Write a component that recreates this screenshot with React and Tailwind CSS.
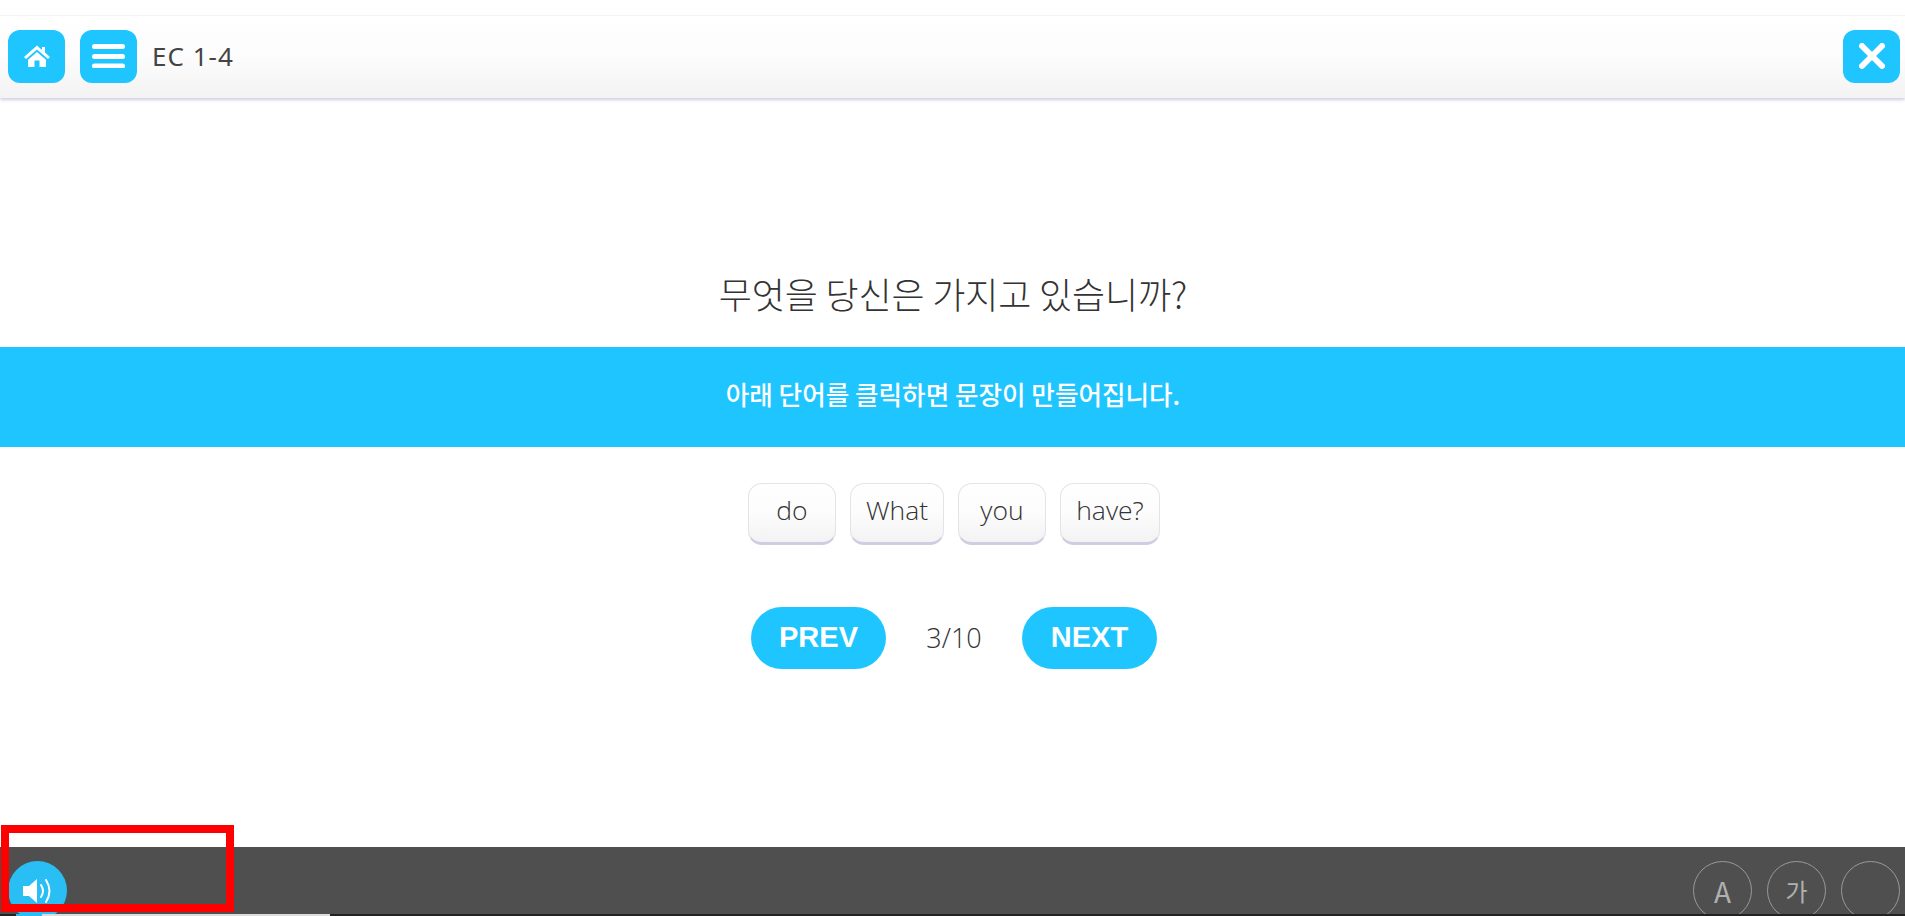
import React from "react";

function Word({ children, w }) {
  return (
    <div className={`${w} h-[62px] flex items-center justify-center rounded-[14px] border border-[#e4e4e8] border-b-[3px] border-b-[#cfcde2] bg-gradient-to-b from-white via-[#fcfcfc] to-[#f3f3f3] text-[26.5px] font-light text-[#333] pb-[4px]`}>
      {children}
    </div>
  );
}

function IconBtn({ children }) {
  return (
    <div className="w-[57px] h-[53px] rounded-[12px] bg-[#1fc5ff] flex items-center justify-center">
      {children}
    </div>
  );
}

export default function App() {
  return (
    <div className="relative h-[916px] w-full overflow-hidden bg-white flex flex-col font-['Open_Sans','Noto_Sans_CJK_KR',sans-serif] text-[#444]">
      <div className="h-[15px] shrink-0 bg-white" />
      <header className="h-[83px] shrink-0 flex items-center justify-between pl-[8px] pr-[5px] pb-[2px] bg-gradient-to-b from-white via-[#fcfcfc] to-[#f3f3f3] border-t border-[#f4f4f4] shadow-[0_2px_3px_#d0cee6]">
        <div className="flex items-center gap-[15px]">
          <IconBtn>
            <svg width="28" height="24" viewBox="0 0 28 24" fill="white">
              <path d="M14 1.5 L1 13 L3 15 L14 5.5 L25 15 L27 13 L22 8.6 V3 H19 V6 Z" />
              <path d="M14 8 L5 15.7 V23 H11.5 V16.5 H16.5 V23 H23 V15.7 Z" />
            </svg>
          </IconBtn>
          <IconBtn>
            <svg width="34" height="24" viewBox="0 0 34 24" fill="white">
              <rect x="0" y="0" width="33" height="5" rx="2.5" />
              <rect x="0" y="10" width="33" height="5" rx="2.5" />
              <rect x="0" y="19.5" width="33" height="5" rx="2.5" />
            </svg>
          </IconBtn>
          <span className="text-[26px] font-normal tracking-[1px] text-[#444] font-['Noto_Sans','Noto_Sans_CJK_KR',sans-serif]">EC 1-4</span>
        </div>
        <IconBtn>
          <svg width="26" height="26" viewBox="0 0 26 26" stroke="white" strokeWidth="6" strokeLinecap="round">
            <path d="M3 3 L23 23 M23 3 L3 23" />
          </svg>
        </IconBtn>
      </header>

      <main className="flex-1 flex flex-col">
        <h1 className="mt-[171px] h-[78px] text-center text-[36px] leading-[48px] tracking-[-0.14px] font-light text-[#333] font-['Noto_Sans_CJK_KR',sans-serif] pl-[1px]">
          무엇을 당신은 가지고 있습니까?
        </h1>
        <div className="h-[100px] bg-[#1fc5ff] flex items-center justify-center text-white text-[25.6px] font-medium font-['Noto_Sans_CJK_KR',sans-serif] pb-[6px] pl-[1px]">
          아래 단어를 클릭하면 문장이 만들어집니다.
        </div>
        <div className="mt-[36px] flex justify-center gap-[14px] pl-[3px]">
          <Word w="w-[88px]">do</Word>
          <Word w="w-[94px]">What</Word>
          <Word w="w-[88px]">you</Word>
          <Word w="w-[100px]">have?</Word>
        </div>
        <div className="mt-[62px] flex justify-center items-center pl-[3px]">
          <div className="w-[135px] h-[62px] rounded-full bg-[#1fc5ff] text-white font-bold text-[29px] flex items-center justify-center font-['Liberation_Sans',sans-serif]">PREV</div>
          <div className="w-[136px] text-center text-[27px] font-light text-[#333]">3/10</div>
          <div className="w-[135px] h-[62px] rounded-full bg-[#1fc5ff] text-white font-bold text-[29px] flex items-center justify-center font-['Liberation_Sans',sans-serif]">NEXT</div>
        </div>
      </main>

      <footer className="relative h-[69px] shrink-0 bg-[#4f4f4f] flex items-start justify-between pl-[8px] pr-[5px] pt-[14px] overflow-hidden">
        <div className="w-[59px] h-[59px] rounded-full bg-[#29bff5] flex items-center justify-center">
          <svg width="32" height="30" viewBox="0 0 32 30" fill="none">
            <path d="M1 10 H7 L15 3 V27 L7 20 H1 Z" fill="white" />
            <path d="M19 9 Q23 15 19 21" stroke="white" strokeWidth="2" strokeLinecap="round" />
            <path d="M24 4 Q31 15 24 26" stroke="white" strokeWidth="2" strokeLinecap="round" />
          </svg>
        </div>
        <div className="flex gap-[15px]">
          <div className="w-[59px] h-[59px] rounded-full border border-[#999] flex items-center justify-center text-[28px] text-[#b0b0b0] font-['Noto_Sans_CJK_KR',sans-serif]">A</div>
          <div className="w-[59px] h-[59px] rounded-full border border-[#999] flex items-center justify-center text-[24px] text-[#b0b0b0] font-['Noto_Sans_CJK_KR',sans-serif]">가</div>
          <div className="w-[59px] h-[59px] rounded-full border border-[#999]" />
        </div>
        <div className="absolute left-0 right-0 bottom-0 h-[2px] bg-[#222]" />
        <div className="absolute left-[42px] w-[288px] bottom-0 h-[2px] bg-[#ddd]" />
        <div className="absolute left-[16px] w-[26px] bottom-0 h-[2px] bg-[#29bff5]" />
      </footer>

      <div className="absolute left-[1px] top-[825px] w-[233px] h-[87px] border-[8px] border-[#fe0000]" />
    </div>
  );
}
